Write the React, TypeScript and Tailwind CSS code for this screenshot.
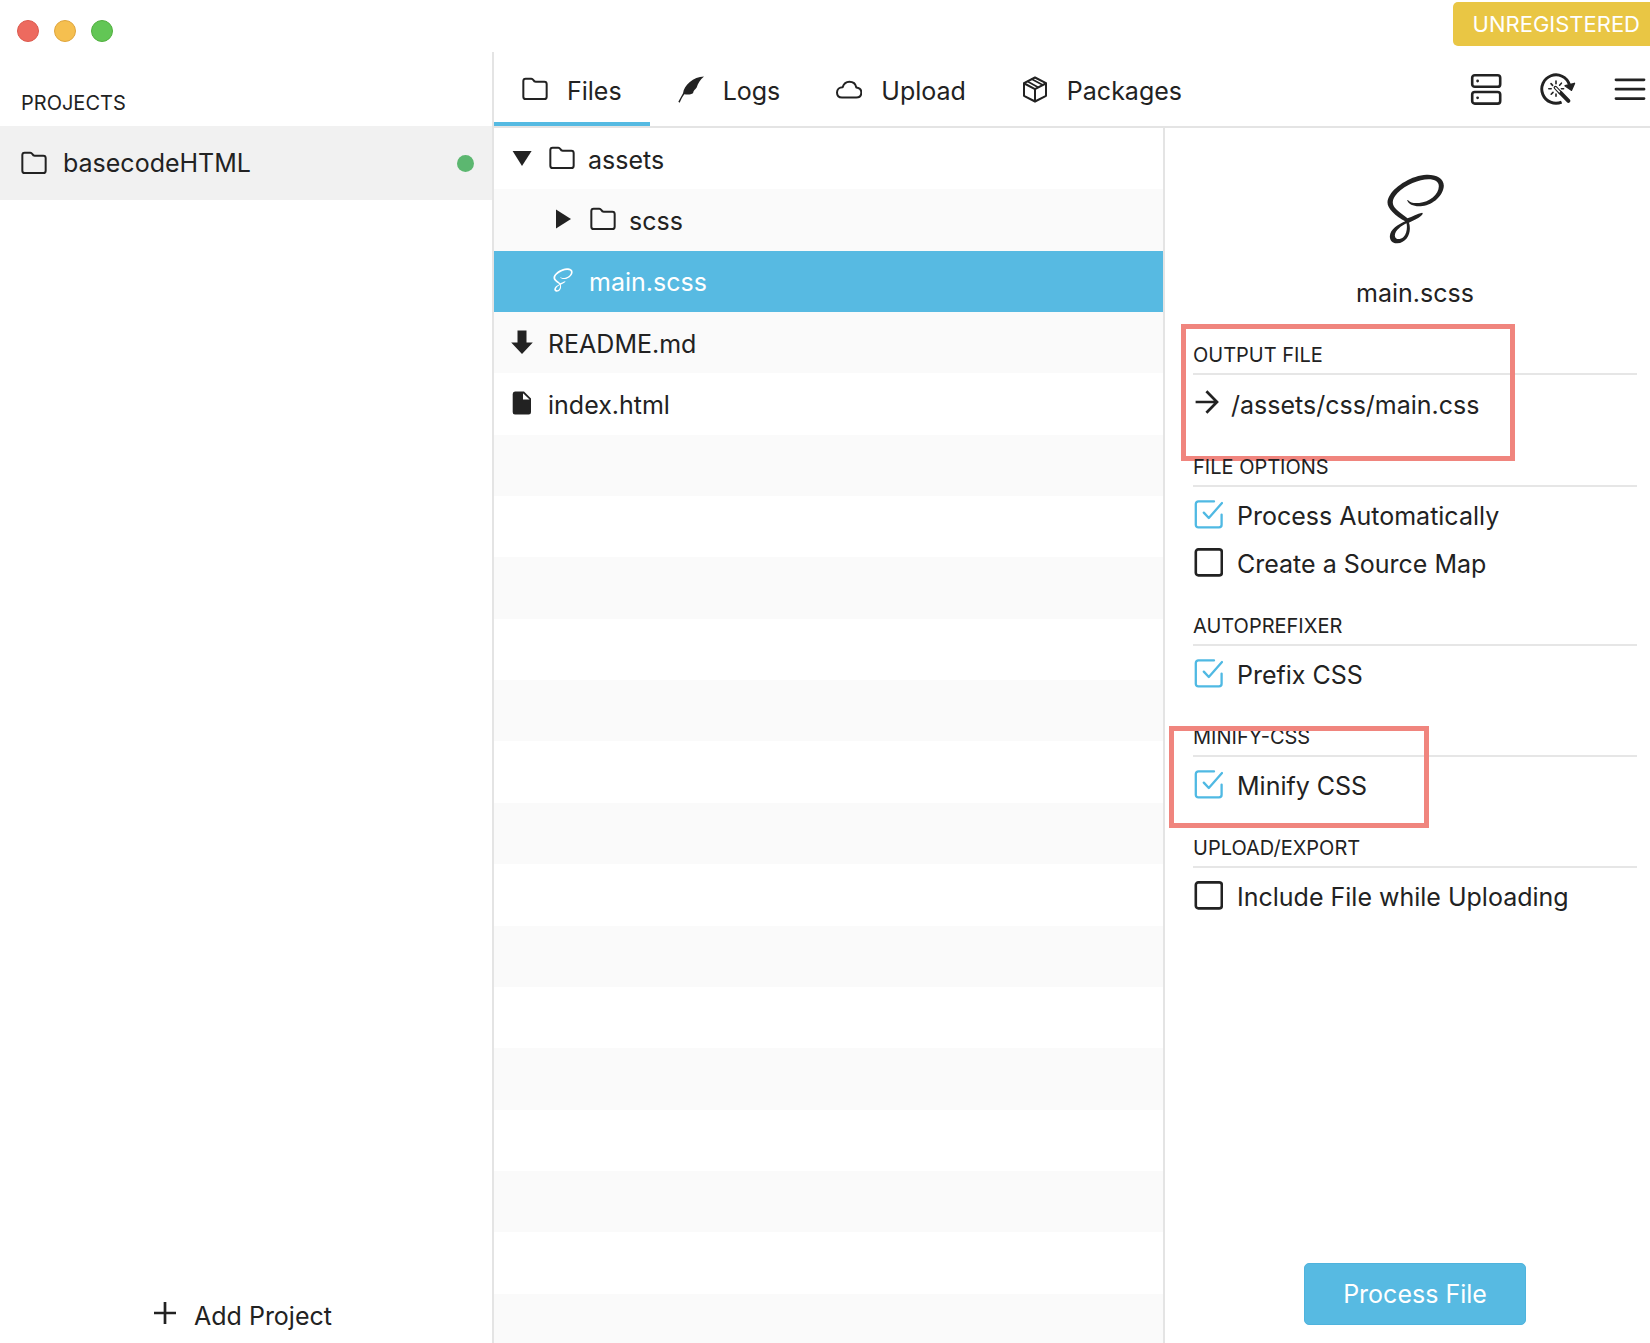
import { useState } from 'react';
import type { ReactNode } from 'react';
import clsx from 'clsx';

type IconProps = { className?: string };

function FolderIcon({ className = 'w-[26px] h-[24px]' }: IconProps) {
  return (
    <svg viewBox="0 0 78 72" className={className} fill="none" stroke="currentColor" strokeWidth="6" strokeLinejoin="round" aria-hidden="true">
      <path d="M11 5h17c3 0 4 1 6 4 2 4 3 5 7 5h26c5 0 7 3 7 7v38c0 5-2 7-7 7H11c-5 0-7-2-7-7V12c0-5 2-7 7-7z" />
    </svg>
  );
}

function QuillIcon() {
  return (
    <svg viewBox="561 77 78 80" className="w-[26px] h-[27px]" fill="currentColor" aria-hidden="true">
      <path d="M639 78C607 79 579 104 576 128L562 154l4 3c4-10 8-18 14-26 11 2 20 1 26-3 2-9 6-10 11-17 4-12 10-23 22-33z" />
    </svg>
  );
}

function CloudIcon() {
  return (
    <svg viewBox="107 75 78 80" className="w-[26px] h-[27px]" fill="none" stroke="currentColor" strokeWidth="6" strokeLinejoin="round" aria-hidden="true">
      <path d="M125 139C115 139 110 132 110 124c0-9 7-16 17-16 3-9 11-16 20-16 11 0 19 7 21 17 9 1 15 7 15 15 0 9-6 15-15 15z" />
    </svg>
  );
}

function PackageIcon() {
  return (
    <svg viewBox="665 76 78 80" className="w-[26px] h-[27px]" fill="none" stroke="currentColor" strokeWidth="6" strokeLinejoin="round" strokeLinecap="round" aria-hidden="true">
      <path d="M704 80l33 17v38l-33 17-33-17V97z" />
      <path d="M672 98l32 17 32-17M704 115v36" />
      <path d="M682 92l31 17M695 85l31 17" strokeWidth="5" />
    </svg>
  );
}

function ServerIcon() {
  return (
    <svg viewBox="0 0 32 32" className="size-8" fill="none" stroke="currentColor" strokeWidth="2.6" aria-hidden="true">
      <rect x="2.2" y="2.2" width="28" height="11.6" rx="2.6" />
      <rect x="2.2" y="19" width="28" height="11.6" rx="2.6" />
      <circle cx="7.6" cy="8" r="1.4" fill="currentColor" stroke="none" />
      <circle cx="7.6" cy="24.8" r="1.4" fill="currentColor" stroke="none" />
    </svg>
  );
}

function ProcessAllIcon() {
  return (
    <svg viewBox="0 0 36 32" className="w-9 h-8" fill="none" stroke="currentColor" aria-hidden="true">
      <path d="M21.6 29.1A14.2 14.2 0 1 1 29.4 11.4" strokeWidth="2.9" />
      <path d="M25.2 12.8L34.4 10.4 31.4 17.2z" fill="currentColor" strokeWidth="1.6" strokeLinejoin="round" />
      <path d="M20.4 19.6L28.400 27.800" strokeWidth="4" strokeLinecap="round" />
      <path d="M15.400 14.600l4.600 4.800" strokeWidth="3.600" strokeLinecap="round" />
      <path d="M15.600 14.800l3.800 4" stroke="#fff" strokeWidth="1.500" strokeLinecap="round" />
      <path d="M16 8v2.800M11 10.600l1.600 1.800M21.400 10.200l-1.800 2M8.800 15.800h2.400M21.400 15.800h2.200M11.200 21.200l1.800-1.800M16 21v2.200" strokeWidth="1.600" strokeLinecap="round" />
    </svg>
  );
}

function MenuIcon() {
  return (
    <svg viewBox="0 0 32 32" className="size-8" stroke="currentColor" strokeWidth="2.800" strokeLinecap="round" aria-hidden="true">
      <path d="M2 6.800h28M2 16.200h28M2 25.600h28" />
    </svg>
  );
}

function SassIcon({ className }: IconProps) {
  return (
    <svg viewBox="676 103 176 210" className={className} fill="currentColor" fillRule="evenodd" aria-hidden="true">
      <path d="M739 181c4 15 24 21 46 18 32-4 63-32 64-61 0-23-24-34-52-33-44 2-92 33-109 60-13 20-10 35 7 52 10 11 26 21 38 28-21 10-45 23-46 45 0 15 10 22 22 21 26-1 39-26 38-46 0-7-1-12-3-16 16-8 34-15 42-27l-2-3c-14 3-30 12-44 17-15-12-34-24-41-36-7-13-2-26 11-40 25-25 65-41 93-41 19 0 31 7 31 21 0 25-29 48-59 50-16 1-26 0-34-9zM737 251c3 11 1 31-9 41-10 9-25 9-26-4 0-15 20-30 35-37z" />
    </svg>
  );
}

function CaretIcon({ open }: { open: boolean }) {
  return (
    <svg viewBox="0 0 20 20" className="size-5" fill="currentColor" aria-hidden="true">
      {open ? <path d="M.6 3h19L10 18z" /> : <path d="M3 .6v19L18 10z" />}
    </svg>
  );
}

function MarkdownIcon() {
  return (
    <svg viewBox="0 0 22 24" className="w-[22px] h-6" fill="currentColor" aria-hidden="true">
      <path d="M6.500.5h9v12H21.800L11 24 .2 12.500h6.300z" />
    </svg>
  );
}

function DocumentIcon() {
  return (
    <svg viewBox="0 0 20 24" className="w-5 h-6" aria-hidden="true">
      <path d="M3 .6h9l7 7v13.6a2.3 2.3 0 0 1-2.3 2.3H3A2.3 2.3 0 0 1 .7 21.200V3A2.400 2.400 0 0 1 3 .6z" fill="currentColor" />
      <path d="M11 2.200v6.400h6.600z" fill="#fff" />
    </svg>
  );
}

function ArrowIcon() {
  return (
    <svg viewBox="0 0 24 24" className="size-6" fill="none" stroke="currentColor" strokeWidth="2.700" aria-hidden="true">
      <path d="M.6 12h21M11.400 1.200L22 12 11.400 22.800" />
    </svg>
  );
}

function PlusIcon() {
  return (
    <svg viewBox="0 0 22 22" className="size-[22px]" stroke="currentColor" strokeWidth="2.700" aria-hidden="true">
      <path d="M0 11h22M11 0v22" />
    </svg>
  );
}

const tabs = [
  { label: 'Files', icon: <FolderIcon /> },
  { label: 'Logs', icon: <QuillIcon /> },
  { label: 'Upload', icon: <CloudIcon /> },
  { label: 'Packages', icon: <PackageIcon /> },
];

const files = [
  { name: 'assets', icons: [<CaretIcon open />, <FolderIcon />], nested: false },
  { name: 'scss', icons: [<CaretIcon open={false} />, <FolderIcon />], nested: true },
  { name: 'main.scss', icons: [<SassIcon className="w-5 h-6" />], nested: true },
  { name: 'README.md', icons: [<MarkdownIcon />], nested: false },
  { name: 'index.html', icons: [<DocumentIcon />], nested: false },
];

const emptyRows = Array.from({ length: 15 }, (_, i) => i);

function Section({ title, highlight, children }: { title: string; highlight?: string; children: ReactNode }) {
  return (
    <section className="relative mb-[23px]">
      <h2 className="border-b-2 border-[#e6e6e6] pb-[3px] text-[20px] leading-[30px]">{title}</h2>
      <div className="pt-[5px]">{children}</div>
      {highlight && <div className={clsx('pointer-events-none absolute border-[5px] border-[#f0857e]', highlight)} />}
    </section>
  );
}

function Option({ label, defaultChecked = false }: { label: string; defaultChecked?: boolean }) {
  const [checked, setChecked] = useState(defaultChecked);

  return (
    <label className="flex h-12 items-center gap-3.5">
      <span className="relative -mt-1 size-[30px]">
        <input
          type="checkbox"
          checked={checked}
          onChange={(e) => setChecked(e.target.checked)}
          className="absolute inset-0 size-full appearance-none"
        />
        <svg
          viewBox="0 0 30 30"
          className={clsx('pointer-events-none absolute inset-0 size-full', checked && 'text-[#4fb9e3]')}
          fill="none"
          stroke="currentColor"
          strokeWidth={checked ? 2.3 : 2.6}
          strokeLinecap="round"
          strokeLinejoin="round"
          aria-hidden="true"
        >
          {checked ? (
            <path d="M21 2.400H5.400A2.600 2.600 0 0 0 2.800 5v21A2.600 2.600 0 0 0 5.400 28.400h20.600a2.600 2.600 0 0 0 2.600-2.600V15.600M10.800 13.600l5 5.400L29 4" />
          ) : (
            <rect x="2.800" y="2.400" width="26" height="26" rx="2.600" />
          )}
        </svg>
      </span>
      {label}
    </label>
  );
}

export default function App() {
  const [activeTab, setActiveTab] = useState('Files');
  const [selectedFile, setSelectedFile] = useState('main.scss');

  return (
    <div className="flex min-h-screen flex-col bg-white font-['Inter',sans-serif] text-[25px] leading-[30px] text-[#222]">
      <header className="flex h-[52px] shrink-0 items-start justify-between">
        <div className="flex gap-[15px] pl-[17px] pt-5">
          <button aria-label="Close" className="size-[22px] rounded-full border border-[#dc5a4e] bg-[#ed6a5f]" />
          <button aria-label="Minimize" className="size-[22px] rounded-full border border-[#dfa53d] bg-[#f5bf4f]" />
          <button aria-label="Zoom" className="size-[22px] rounded-full border border-[#51b03f] bg-[#62c655]" />
        </div>
        <a href="#register" className="mt-0.5 flex h-11 items-center rounded-l-[5px] bg-[#e9c644] pl-5 pr-2.5 text-[22px] text-white">
          UNREGISTERED
        </a>
      </header>

      <div className="grid flex-1 grid-cols-[494fr_1156fr]">
        <aside className="flex flex-col border-r-2 border-[#e4e4e4]">
          <h2 className="pb-2 pl-[21px] pt-9 text-[20px]">PROJECTS</h2>
          <button className="flex h-[74px] items-center bg-[#f1f1f1] pl-[21px] pr-[18px]">
            <FolderIcon />
            <span className="ml-4">basecodeHTML</span>
            <span className="ml-auto size-[17px] rounded-full bg-[#5cb770]" />
          </button>
          <button className="mb-3 mt-auto flex items-center gap-[18px] self-center pr-1.5">
            <span className="-mt-1.5"><PlusIcon /></span>
            Add Project
          </button>
        </aside>

        <main className="flex flex-col">
          <nav className="flex h-[76px] shrink-0 justify-between border-b-2 border-[#e4e4e4] pr-1">
            <div className="flex" role="tablist">
              {tabs.map((tab) => (
                <button
                  key={tab.label}
                  role="tab"
                  aria-selected={tab.label === activeTab}
                  onClick={() => setActiveTab(tab.label)}
                  className={clsx(
                    'flex items-center gap-[19px] border-b-4 px-7 pt-2',
                    tab.label === activeTab ? 'border-[#55bae2]' : 'border-transparent',
                  )}
                >
                  <span className="-mt-1">{tab.icon}</span>
                  {tab.label}
                </button>
              ))}
            </div>
            <div className="flex items-center gap-[38px]">
              <button aria-label="Servers"><ServerIcon /></button>
              <button aria-label="Process all files"><ProcessAllIcon /></button>
              <button aria-label="Menu"><MenuIcon /></button>
            </div>
          </nav>

          <div className="grid flex-1 grid-cols-[671fr_485fr] overflow-hidden">
            <div className="flex flex-col border-r-2 border-[#e4e4e4]">
              {/* the last stripe runs past the bottom of the window */}
              <ul className="-mb-3 grid flex-1 auto-rows-fr">
                {files.map((file) => (
                  <li key={file.name} className="even:bg-[#fafafa]">
                    <button
                      onClick={() => setSelectedFile(file.name)}
                      className={clsx(
                        'flex h-full min-h-14 w-full items-center gap-3 pt-0.5',
                        file.nested ? 'pl-[55px]' : 'pl-3.5',
                        file.name === selectedFile && 'bg-[#57bae2] text-white',
                      )}
                    >
                      {file.icons.map((icon, i) => (
                        <span key={i} className="-mt-1 flex w-7 justify-center">{icon}</span>
                      ))}
                      {file.name}
                    </button>
                  </li>
                ))}
                {emptyRows.map((row) => (
                  <li key={row} className="even:bg-[#fafafa]" />
                ))}
              </ul>
            </div>

            <div className="flex flex-col pb-[18px] pl-7 pr-[13px]">
              <div className="flex flex-col items-center pb-8 pt-[46px]">
                <SassIcon className="h-[70px] w-[59px]" />
                <p className="mt-[34px]">main.scss</p>
              </div>

              <Section title="OUTPUT FILE" highlight="-left-3 -top-4 h-[137px] w-[334px]">
                <button className="flex h-[49px] items-center gap-3 pl-0.5">
                  <span className="-mt-1.5"><ArrowIcon /></span>
                  /assets/css/main.css
                </button>
              </Section>
              <Section title="FILE OPTIONS">
                <Option label="Process Automatically" defaultChecked />
                <Option label="Create a Source Map" />
              </Section>
              <Section title="AUTOPREFIXER">
                <Option label="Prefix CSS" defaultChecked />
              </Section>
              <Section title="MINIFY-CSS" highlight="-left-6 top-1 h-[102px] w-[260px]">
                <Option label="Minify CSS" defaultChecked />
              </Section>
              <Section title="UPLOAD/EXPORT">
                <Option label="Include File while Uploading" />
              </Section>

              <button className="mt-auto h-[62px] self-center rounded-[5px] border border-[#4fb3dd] bg-[#57bae2] px-[38px] text-white">
                Process File
              </button>
            </div>
          </div>
        </main>
      </div>
    </div>
  );
}
